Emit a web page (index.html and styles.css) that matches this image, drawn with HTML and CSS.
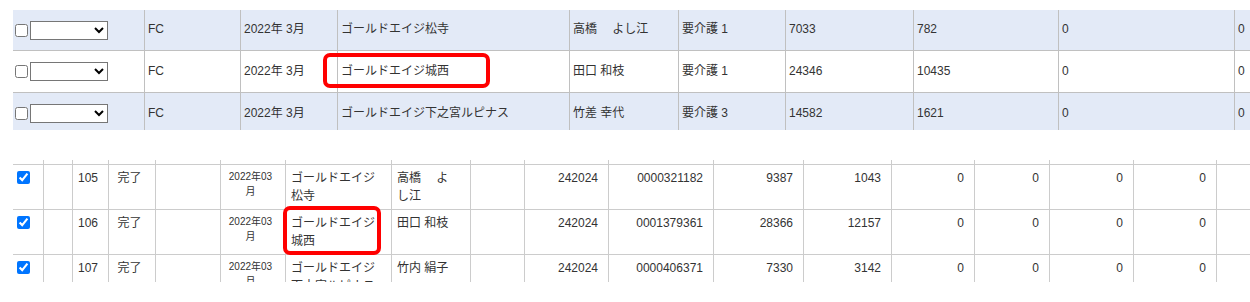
FILE: index.html
```html
<!DOCTYPE html>
<html lang="ja">
<head>
<meta charset="utf-8">
<link rel="stylesheet" href="styles.css">
</head>
<body>
<div class="top">
  <div class="trow alt h41">
    <div class="tc sel"><input type="checkbox" class="cb"><select class="dd"><option></option></select></div>
    <div class="tc">FC</div>
    <div class="tc">2022年 3月</div>
    <div class="tc">ゴールドエイジ松寺</div>
    <div class="tc">高橋　 よし江</div>
    <div class="tc">要介護 1</div>
    <div class="tc">7033</div>
    <div class="tc">782</div>
    <div class="tc">0</div>
    <div class="tc">0</div>
  </div>
  <div class="trow h42">
    <div class="tc sel"><input type="checkbox" class="cb"><select class="dd"><option></option></select></div>
    <div class="tc">FC</div>
    <div class="tc">2022年 3月</div>
    <div class="tc">ゴールドエイジ城西</div>
    <div class="tc">田口 和枝</div>
    <div class="tc">要介護 1</div>
    <div class="tc">24346</div>
    <div class="tc">10435</div>
    <div class="tc">0</div>
    <div class="tc">0</div>
  </div>
  <div class="trow alt h42">
    <div class="tc sel"><input type="checkbox" class="cb"><select class="dd"><option></option></select></div>
    <div class="tc">FC</div>
    <div class="tc">2022年 3月</div>
    <div class="tc">ゴールドエイジ下之宮ルピナス</div>
    <div class="tc">竹差 幸代</div>
    <div class="tc">要介護 3</div>
    <div class="tc">14582</div>
    <div class="tc">1621</div>
    <div class="tc">0</div>
    <div class="tc">0</div>
  </div>
</div>

<div class="bottom">
  <div class="brow head">
    <div class="bc"></div><div class="bc"></div><div class="bc"></div><div class="bc"></div><div class="bc"></div><div class="bc"></div>
    <div class="bc"></div><div class="bc"></div><div class="bc"></div><div class="bc"></div><div class="bc"></div><div class="bc"></div>
    <div class="bc"></div><div class="bc"></div><div class="bc"></div><div class="bc"></div><div class="bc"></div><div class="bc"></div>
  </div>
  <div class="brow">
    <div class="bc chk"><input type="checkbox" class="cb2" checked></div>
    <div class="bc"></div>
    <div class="bc ctr">105</div>
    <div class="bc ctr">完了</div>
    <div class="bc"></div>
    <div class="bc date">2022年03月</div>
    <div class="bc">ゴールドエイジ松寺</div>
    <div class="bc">高橋　 よし江</div>
    <div class="bc"></div>
    <div class="bc num">242024</div>
    <div class="bc num">0000321182</div>
    <div class="bc num">9387</div>
    <div class="bc num">1043</div>
    <div class="bc num">0</div>
    <div class="bc num">0</div>
    <div class="bc num">0</div>
    <div class="bc num">0</div>
    <div class="bc"></div>
  </div>
  <div class="brow">
    <div class="bc chk"><input type="checkbox" class="cb2" checked></div>
    <div class="bc"></div>
    <div class="bc ctr">106</div>
    <div class="bc ctr">完了</div>
    <div class="bc"></div>
    <div class="bc date">2022年03月</div>
    <div class="bc">ゴールドエイジ城西</div>
    <div class="bc">田口 和枝</div>
    <div class="bc"></div>
    <div class="bc num">242024</div>
    <div class="bc num">0001379361</div>
    <div class="bc num">28366</div>
    <div class="bc num">12157</div>
    <div class="bc num">0</div>
    <div class="bc num">0</div>
    <div class="bc num">0</div>
    <div class="bc num">0</div>
    <div class="bc"></div>
  </div>
  <div class="brow">
    <div class="bc chk"><input type="checkbox" class="cb2" checked></div>
    <div class="bc"></div>
    <div class="bc ctr">107</div>
    <div class="bc ctr">完了</div>
    <div class="bc"></div>
    <div class="bc date">2022年03月</div>
    <div class="bc">ゴールドエイジ下之宮ルピナス</div>
    <div class="bc">竹内 絹子</div>
    <div class="bc"></div>
    <div class="bc num">242024</div>
    <div class="bc num">0000406371</div>
    <div class="bc num">7330</div>
    <div class="bc num">3142</div>
    <div class="bc num">0</div>
    <div class="bc num">0</div>
    <div class="bc num">0</div>
    <div class="bc num">0</div>
    <div class="bc"></div>
  </div>
</div>

<div class="mark mark1"></div>
<div class="mark mark2"></div>
</body>
</html>
```

FILE: styles.css
```css
html, body {
  margin: 0;
  padding: 0;
}
body {
  position: relative;
  width: 1250px;
  height: 302px;
  overflow: hidden;
  background: #fff;
  font-family: "Liberation Sans", "Noto Sans CJK JP", sans-serif;
  font-size: 12px;
  color: #333;
}

/* top table */
.top {
  margin: 10px 0 0 13px;
  height: 120px;
  overflow: hidden;
  width: 1237px;
}
.trow {
  display: grid;
  grid-template-columns: 132px 96px 97px 232px 109px 107px 128px 145px 176px 100px;
  border-bottom: 1px solid #c0c0c0;
  box-sizing: border-box;
  width: max-content;
  background: #fff;
}
.trow.alt {
  background: #e3eaf7;
}
.h41 { height: 41px; }
.h42 { height: 42px; }
.tc {
  box-sizing: border-box;
  border-right: 1px solid #c0c0c0;
  padding: 0 3px 2px 3px;
  display: flex;
  align-items: center;
  line-height: 18px;
  white-space: nowrap;
  overflow: hidden;
}
.tc.sel {
  padding: 0 0 0 2px;
}
.cb {
  margin: 0 2px 0 0;
  width: 13px;
  height: 13px;
}
.dd {
  margin: 0 0 0 0;
  width: 78px;
  height: 19px;
  font-size: 12px;
  font-family: "Liberation Sans", sans-serif;
  background: #fff;
  border: 1px solid #767676;
  border-radius: 0;
}

/* bottom table */
.bottom {
  position: absolute;
  left: 13px;
  top: 160px;
  width: 1237px;
  height: 122px;
  overflow: hidden;
}
.brow {
  display: grid;
  grid-template-columns: 31px 29px 36px 47px 65px 65px 106px 79px 54px 84px 105px 90px 88px 83px 75px 84px 83px 100px;
  border-bottom: 1px solid #cccccc;
  box-sizing: border-box;
  height: 45px;
  width: max-content;
}
.brow.head {
  height: 5px;
}
.bc {
  box-sizing: border-box;
  border-right: 1px solid #cccccc;
  padding: 4px 10px 4px 5px;
  line-height: 18px;
  overflow: hidden;
}
.brow.head .bc {
  padding: 0;
}
.bc.ctr {
  text-align: center;
}
.bc.num {
  text-align: right;
}
.bc.date {
  text-align: center;
  font-size: 10px;
  line-height: 15px;
}
.bc.chk {
  padding: 6px 0 0 4px;
}
.cb2 {
  display: block;
  margin: 0;
  width: 13px;
  height: 13px;
}

/* annotations */
.mark {
  position: absolute;
  box-sizing: border-box;
  border: 4px solid #ff0000;
  border-radius: 7px;
}
.mark1 {
  left: 323px;
  top: 53px;
  width: 167px;
  height: 35px;
}
.mark2 {
  left: 283px;
  top: 206px;
  width: 98px;
  height: 49px;
}
```
